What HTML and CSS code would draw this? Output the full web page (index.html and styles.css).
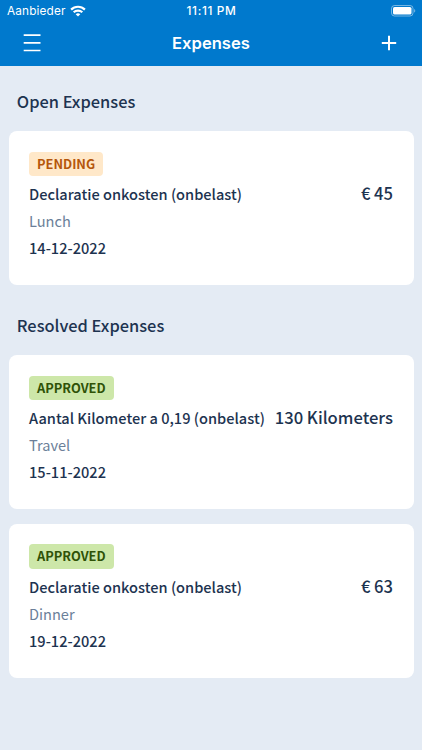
FILE: index.html
```html
<!DOCTYPE html>
<html lang="en">
<head>
    <meta charset="UTF-8">
    <meta name="viewport" content="width=device-width, initial-scale=1.0">
    <title>Expenses</title>
    <link rel="stylesheet" href="styles.css">
</head>
<body>
    <header class="header">
        <div class="status-bar">
            <div class="carrier">
                <span class="carrier-name">Aanbieder</span>
                <svg class="wifi" width="16" height="12" viewBox="0 0 16 12" fill="none" stroke="#fff" stroke-width="2.2">
                    <path d="M1.1 4.6a9.8 9.8 0 0 1 13.8 0"/>
                    <path d="M3.7 7.3a6.1 6.1 0 0 1 8.6 0"/>
                    <path d="M8 11.6L5.7 9.3a3.3 3.3 0 0 1 4.6 0z" fill="#fff" stroke="none"/>
                </svg>
            </div>
            <span class="clock">11:11 PM</span>
            <svg class="battery" width="25" height="12" viewBox="0 0 25 12">
                <rect x="0.5" y="0.5" width="21.5" height="10.5" rx="3" fill="none" stroke="#fff" stroke-opacity="0.45"/>
                <rect x="2" y="2" width="18.5" height="7.5" rx="1.6" fill="#fff"/>
                <path d="M23.2 4v3.6c1.4-.5 1.4-3.1 0-3.6z" fill="#fff" fill-opacity="0.5"/>
            </svg>
        </div>
        <nav class="nav">
            <svg width="18" height="18" viewBox="0 0 18 18" stroke="#fff" stroke-width="1.7">
                <path d="M0.7 1.2h16.8M0.7 8.9h16.8M0.7 16.5h16.8"/>
            </svg>
            <h1 class="nav-title">Expenses</h1>
            <svg width="16" height="16" viewBox="0 0 16 16" stroke="#fff" stroke-width="2">
                <path d="M0.8 8h14.4M8 0.8v14.4"/>
            </svg>
        </nav>
    </header>

    <main class="content">
        <section class="section">
            <h2 class="section-title">Open Expenses</h2>
            <div class="card">
                <span class="badge pending">PENDING</span>
                <div class="row">
                    <span class="name">Declaratie onkosten (onbelast)</span>
                    <span class="amount">€ 45</span>
                </div>
                <p class="category">Lunch</p>
                <p class="date">14-12-2022</p>
            </div>
        </section>

        <section class="section">
            <h2 class="section-title">Resolved Expenses</h2>
            <div class="card">
                <span class="badge approved">APPROVED</span>
                <div class="row">
                    <span class="name">Aantal Kilometer a 0,19 (onbelast)</span>
                    <span class="amount">130 Kilometers</span>
                </div>
                <p class="category">Travel</p>
                <p class="date">15-11-2022</p>
            </div>
            <div class="card">
                <span class="badge approved">APPROVED</span>
                <div class="row">
                    <span class="name">Declaratie onkosten (onbelast)</span>
                    <span class="amount">€ 63</span>
                </div>
                <p class="category">Dinner</p>
                <p class="date">19-12-2022</p>
            </div>
        </section>
    </main>
</body>
</html>
```

FILE: styles.css
```css
* {
    box-sizing: border-box;
    margin: 0;
    padding: 0;
}

body {
    min-height: 100vh;
    font-family: "Noto Sans CJK SC", "Noto Sans", sans-serif;
    background-color: #e4ebf4;
    color: #1d3350;
}

.header {
    height: 66px;
    background-color: #0079cd;
    color: #fff;
    font-family: Inter, "Liberation Sans", sans-serif;
}

.status-bar {
    display: grid;
    grid-template-columns: 1fr auto 1fr;
    align-items: center;
    height: 21px;
    padding: 0 6px 0 7px;
}

.carrier {
    display: flex;
    align-items: center;
    gap: 4px;
}

.carrier-name {
    font-size: 11.8px;
    letter-spacing: 0.15px;
}

.clock {
    font-size: 11.8px;
    font-weight: 500;
    letter-spacing: 0.65px;
}

.battery {
    justify-self: end;
}

.nav {
    display: flex;
    justify-content: space-between;
    align-items: center;
    height: 44px;
    padding: 0 25px 0 23px;
}

.nav-title {
    font-size: 16.6px;
    font-weight: 600;
}

.content {
    padding: 0 8.5px;
}

.section-title {
    height: 65px;
    padding: 21px 8.3px 0;
    font-size: 16.4px;
    font-weight: 500;
    line-height: 28px;
}

.section + .section {
    padding-top: 5px;
}

.card {
    height: 154px;
    padding: 20.7px 20.5px 0;
    border-radius: 8px;
    background-color: #fff;
}

.card + .card {
    margin-top: 14.7px;
}

.badge {
    display: block;
    width: fit-content;
    height: 24.5px;
    padding: 0 8px;
    border-radius: 4px;
    font-size: 12.8px;
    font-weight: 700;
    line-height: 24.5px;
}

.pending {
    background-color: #ffe8c9;
    color: #b5560b;
}

.approved {
    background-color: #cde7a9;
    color: #2f5207;
}

.row {
    display: flex;
    justify-content: space-between;
    margin-top: 4px;
    line-height: 27px;
    white-space: nowrap;
}

.name,
.date {
    font-size: 14.6px;
    font-weight: 500;
}

.amount {
    font-size: 16.6px;
    font-weight: 500;
    line-height: 26px;
}

.category,
.date {
    line-height: 27px;
}

.category {
    font-size: 14.6px;
    color: #6b7f99;
}
```
